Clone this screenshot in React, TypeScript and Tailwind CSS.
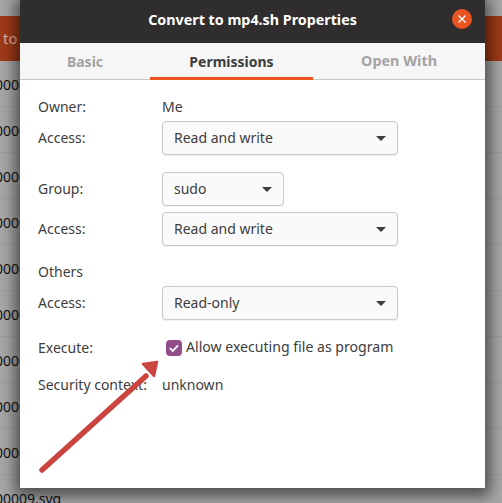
const font = "font-['Noto_Sans',sans-serif]";

function Select({ label, width }: { label: string; width: string }) {
  return (
    <div
      className={`${width} h-[34px] flex items-center justify-between pl-[11px] pr-[11px] bg-[#fafafa] border border-[#cdc7c2] rounded-[4px] text-[#3d3d3d] shadow-[0_1px_0_#f0f0f0]`}
    >
      <span className="pb-[2px]">{label}</span>
      <span className="w-0 h-0 border-x-[5px] border-x-transparent border-t-[5px] border-t-[#3d3d3d]" />
    </div>
  );
}

function Row({ label, className, children }: { label: string; className?: string; children?: React.ReactNode }) {
  return (
    <div className={`flex items-center ${className ?? ""}`}>
      <span className="w-[124px] shrink-0 whitespace-nowrap pb-[2px]">{label}</span>
      {children}
    </div>
  );
}

function BackgroundRow({ last }: { last?: boolean }) {
  return (
    <div className="h-[46px] shrink-0 border-b border-[#9f9f9f] pt-[2px] flex items-center">
      <span className="-ml-[5px] text-[#111] whitespace-nowrap">{last ? "00009.svg" : "00000"}</span>
    </div>
  );
}

export default function App() {
  return (
    <div className={`relative w-[502px] h-[503px] overflow-hidden bg-[#a8a8a8] text-[14px] ${font}`}>
      {/* dimmed file list behind the dialog */}
      <div className="flex flex-col pt-[16px]">
        <div className="h-[45px] shrink-0 bg-[#a03a17] text-[#d9b5a5] text-[15px] flex items-center pl-[3px]">to</div>
        {Array.from({ length: 9 }).map((_, i) => (
          <BackgroundRow key={i} />
        ))}
        <BackgroundRow last />
      </div>

      {/* properties dialog */}
      <div className="absolute left-[20px] top-0 w-[465px] h-[488px] bg-white flex flex-col shadow-[0_3px_14px_5px_rgba(0,0,0,0.55)] text-[#3d3d3d]">
        <div className="h-[43px] shrink-0 bg-[#2f2d2d] flex items-center justify-center relative">
          <span className="font-bold text-white text-[14.3px] pb-[4px]">Convert to mp4.sh Properties</span>
          <div className="absolute right-[13px] top-[9px] w-[20px] h-[20px] rounded-full bg-[#e95420] flex items-center justify-center">
            <svg width="10" height="10" viewBox="0 0 10 10">
              <path d="M1.5 1.5l7 7M8.5 1.5l-7 7" stroke="#fff" strokeWidth="1.4" />
            </svg>
          </div>
        </div>

        <div className="h-[37px] shrink-0 bg-[#f6f6f6] border-b border-[#c8c8c8] flex font-bold">
          <div className="w-[130px] flex items-center justify-center text-[#a3a3a3]">Basic</div>
          <div className="w-[163px] flex items-center justify-center text-[#3d3d3d] border-b-[3px] border-[#e95420] h-[37px] pt-[3px]">
            Permissions
          </div>
          <div className="flex-1 flex items-center justify-center text-[#a3a3a3] text-[14.4px]">Open With</div>
        </div>

        <div className="flex flex-col pl-[18px] pt-[17px]">
          <Row label="Owner:" className="h-[20px]">
            <span className="pb-[2px]">Me</span>
          </Row>
          <Row label="Access:" className="mt-[4px]">
            <Select label="Read and write" width="w-[236px]" />
          </Row>
          <Row label="Group:" className="mt-[17px]">
            <Select label="sudo" width="w-[122px]" />
          </Row>
          <Row label="Access:" className="mt-[6px]">
            <Select label="Read and write" width="w-[236px]" />
          </Row>
          <Row label="Others" className="h-[20px] mt-[16px]" />
          <Row label="Access:" className="mt-[4px]">
            <Select label="Read-only" width="w-[236px]" />
          </Row>
          <Row label="Execute:" className="h-[20px] mt-[18px]">
            <span className="ml-[4px] w-[16px] h-[16px] rounded-[4px] bg-[#924d8b] flex items-center justify-center">
              <svg width="12" height="12" viewBox="0 0 12 12">
                <path d="M2 6.2l2.8 2.8L10 3.4" fill="none" stroke="#fff" strokeWidth="1.8" />
              </svg>
            </span>
            <span className="ml-[4px] whitespace-nowrap pb-[2px] text-[14.1px]">Allow executing file as program</span>
          </Row>
          <Row label="Security context:" className="h-[20px] mt-[17px]">
            <span className="pb-[2px]">unknown</span>
          </Row>
        </div>
      </div>

      {/* annotation arrow */}
      <svg className="absolute left-0 top-0" width="502" height="503" viewBox="0 0 502 503">
        <path d="M42 470L146 376" stroke="#cc4440" strokeWidth="5.5" strokeLinecap="round" fill="none" />
        <path d="M157 362L143 364L154 376Z" fill="#cc4440" stroke="#cc4440" strokeWidth="2.5" strokeLinejoin="round" />
      </svg>
    </div>
  );
}
